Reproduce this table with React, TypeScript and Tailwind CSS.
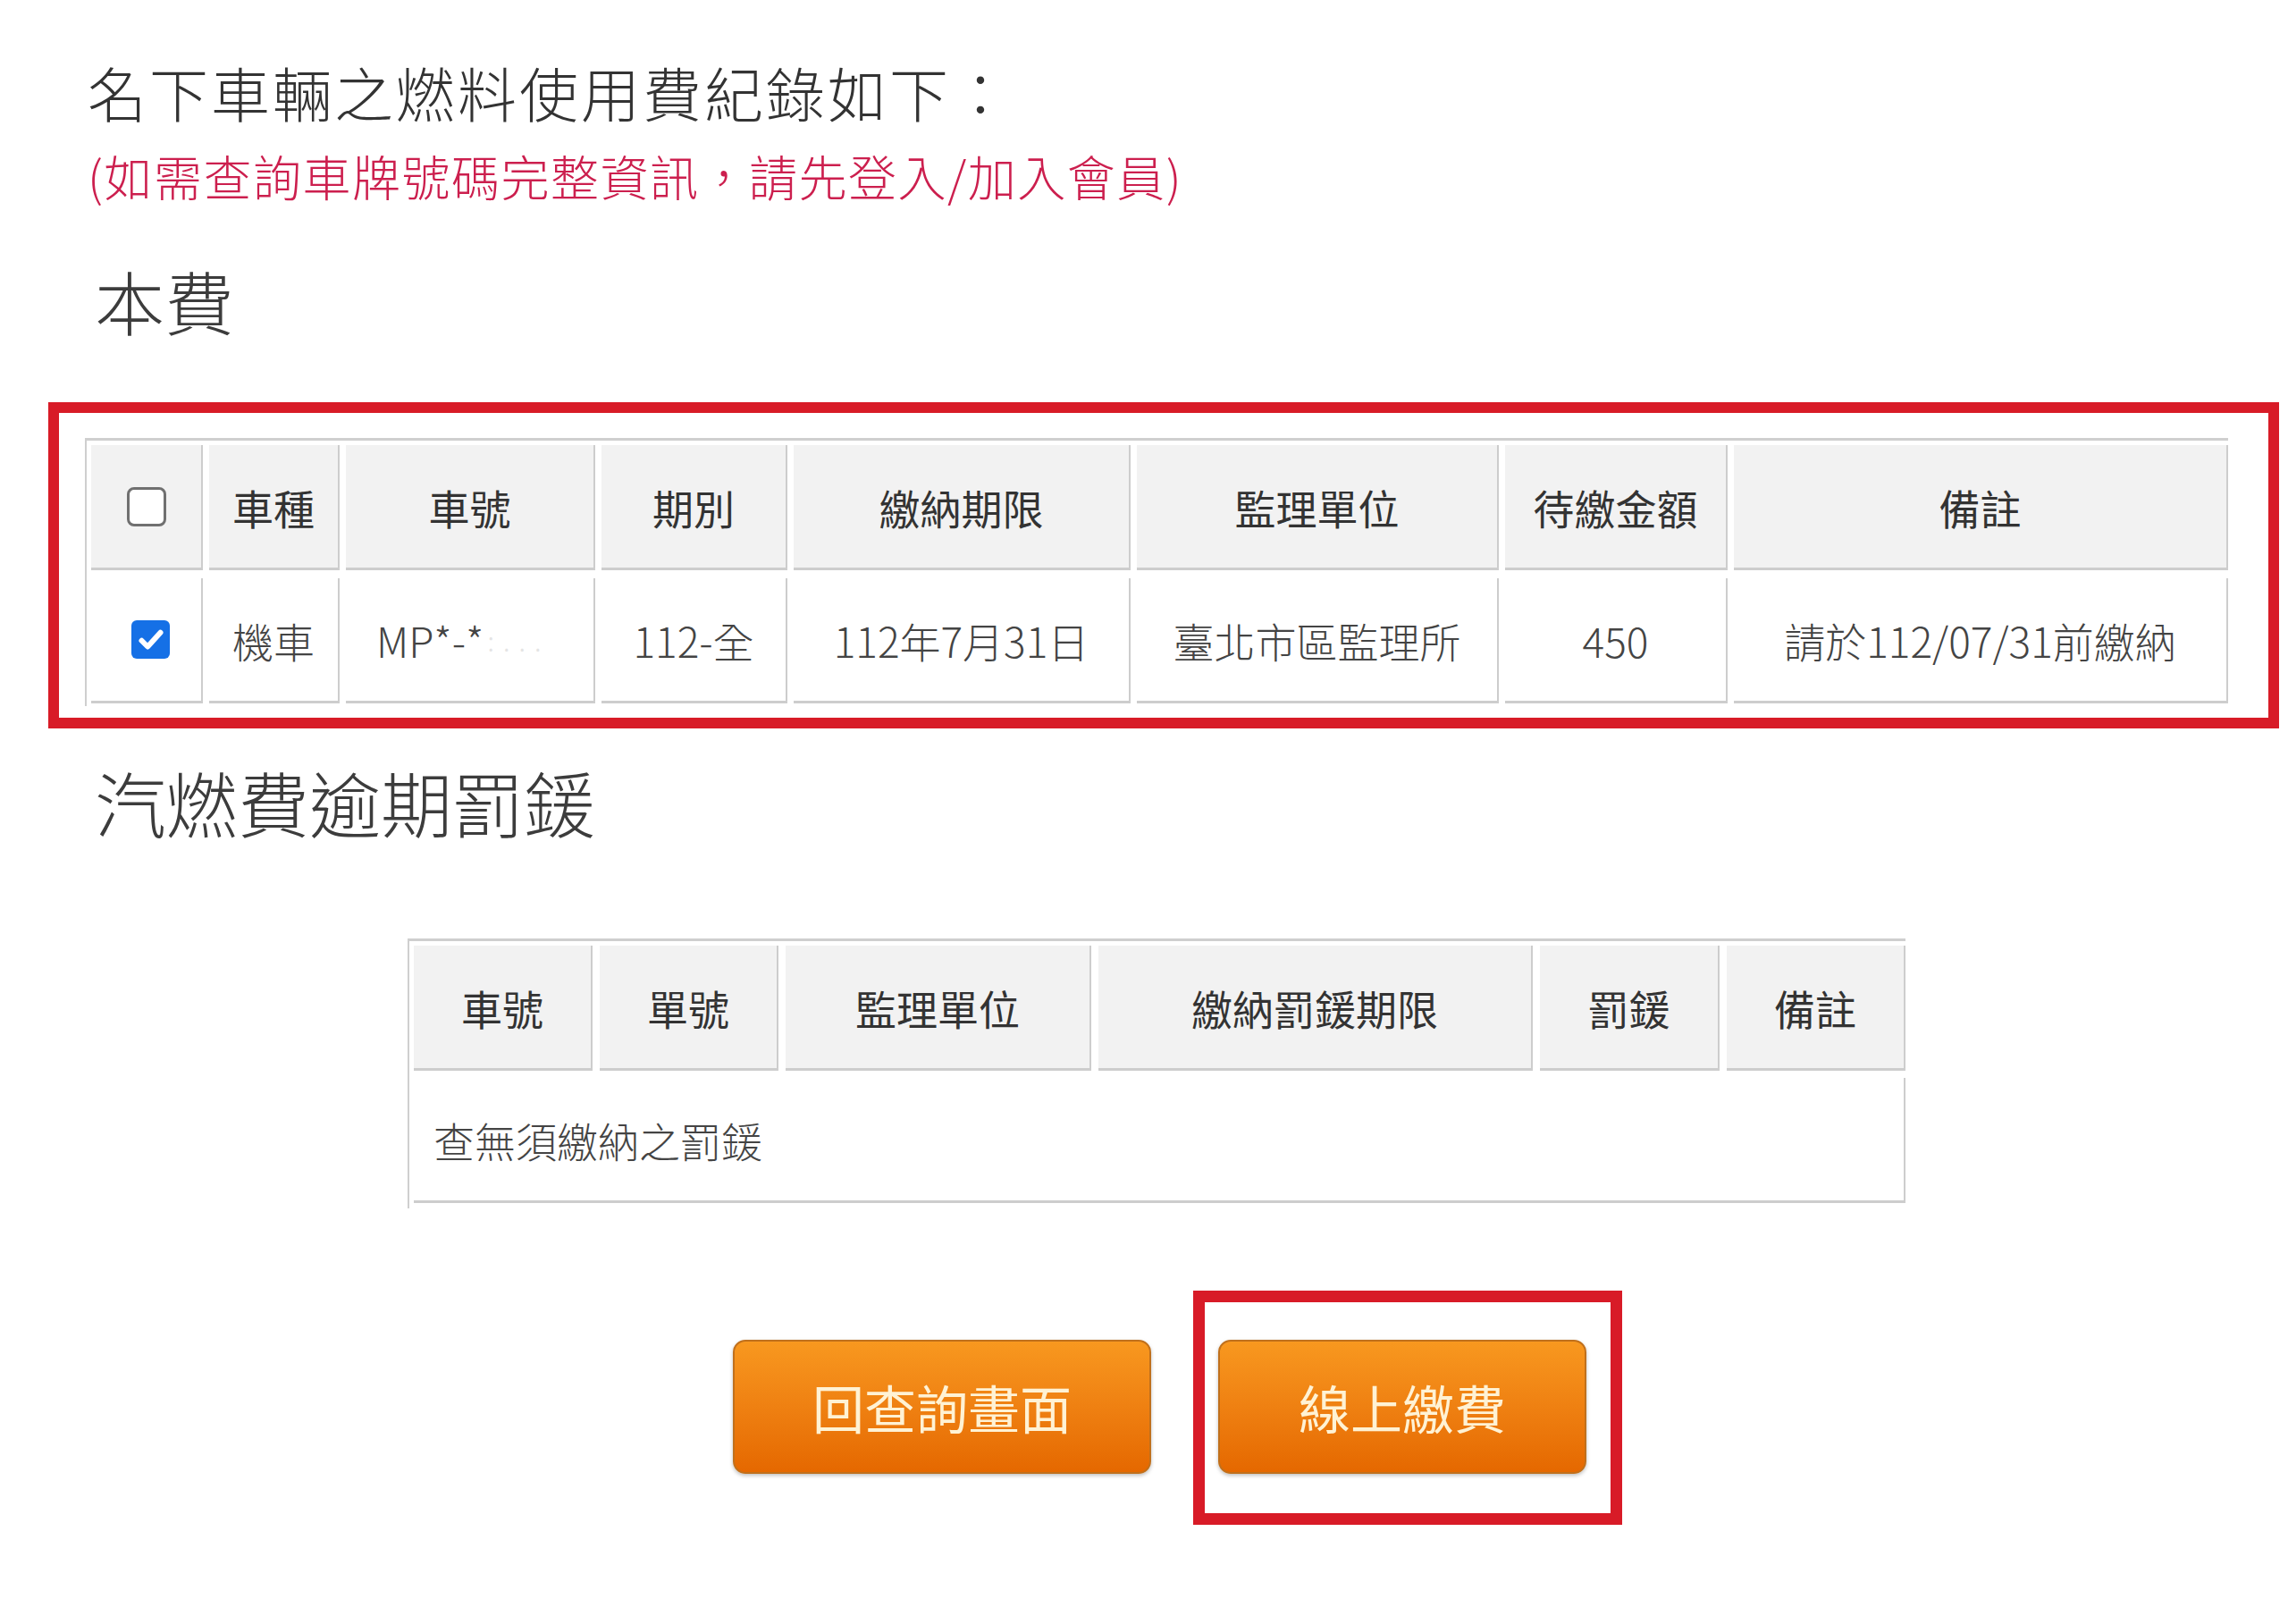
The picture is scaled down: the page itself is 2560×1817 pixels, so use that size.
import React from "react";

const FONT = "font-['Noto_Sans_CJK_TC','Noto_Sans_CJK_SC',sans-serif]";

function Check({ checked }: { checked: boolean }) {
  if (checked) {
    return (
      <div className="ml-[10px] flex h-[43px] w-[43px] items-center justify-center rounded-[6px] bg-[#1570e6]">
        <svg viewBox="0 0 24 24" className="h-[36px] w-[36px]" fill="none" stroke="#ffffff" strokeWidth="4" strokeLinecap="round" strokeLinejoin="round">
          <path d="M5 12.5l4.5 4.5L19 6.5" />
        </svg>
      </div>
    );
  }
  return <div className="h-[44px] w-[44px] rounded-[8px] border-[3px] border-[#707070] bg-white" />;
}

const head1 = ["車種", "車號", "期別", "繳納期限", "監理單位", "待繳金額", "備註"];
const data1 = ["機車", "", "112-全", "112年7月31日", "臺北市區監理所", "450", "請於112/07/31前繳納"];

const head2 = ["車號", "單號", "監理單位", "繳納罰鍰期限", "罰鍰", "備註"];

export default function App() {
  const th = "flex h-[140px] items-center justify-center whitespace-nowrap bg-[#f2f2f2] border-r-2 border-b-[3px] border-[#cdcdcd] text-[46px] font-normal leading-none text-[#333]";
  const td = "flex h-[140px] items-center justify-center whitespace-nowrap bg-white border-r-2 border-b-[3px] border-[#cdcdcd] text-[46px] font-light leading-none text-[#444]";
  return (
    <div className={`${FONT} relative h-[1817px] w-[2560px] overflow-hidden bg-white`}>
      <div className="flex flex-col">
        <h1 className="ml-[98px] mt-[69px] text-[66px] font-light leading-none tracking-[3px] text-[#333]">
          名下車輛之燃料使用費紀錄如下：
        </h1>
        <p className="ml-[98px] mt-[35px] text-[54px] font-light leading-none tracking-[1.5px] text-[#cc1f4e]">
          (如需查詢車牌號碼完整資訊，請先登入/加入會員)
        </p>
        <h2 className="ml-[106px] mt-[73px] text-[78px] font-light leading-none text-[#3c3c3c]">本費</h2>

        <div className="ml-[54px] mt-[75px] w-[2496px] border-[12px] border-[#d81b27] pb-[13px] pl-[29px] pt-[28px]">
          <div className="grid w-max grid-cols-[125px_146px_279px_208px_377px_405px_249px_553px] gap-x-[7px] gap-y-[9px] border-l-2 border-t-[3px] border-[#cfcfcf] pb-[3px] pl-[5px] pt-[5px]">
            <div className={th}>
              <Check checked={false} />
            </div>
            {head1.map((h) => (
              <div key={h} className={th}>
                {h}
              </div>
            ))}
            <div className={td}>
              <Check checked={true} />
            </div>
            {data1.map((d, i) =>
              i === 1 ? (
                <div key={i} className={`${td} !justify-start pl-[34px]`}>
                  <span>MP*-*</span>
                  <span className="ml-[4px] text-[30px] tracking-[10px] text-[#e4e4e4]">:...</span>
                </div>
              ) : (
                <div key={i} className={td}>
                  {d}
                </div>
              )
            )}
          </div>
        </div>

        <h2 className="ml-[106px] mt-[41px] text-[80px] font-light leading-none text-[#3c3c3c]">汽燃費逾期罰鍰</h2>

        <div className="ml-[456px] mt-[114px] grid w-max grid-cols-[200px_200px_342px_486px_201px_200px] gap-x-[8px] gap-y-[8px] border-l-2 border-t-[3px] border-[#cfcfcf] pb-[6px] pl-[5px] pt-[5px]">
          {head2.map((h) => (
            <div key={h} className={th}>
              {h}
            </div>
          ))}
          <div className={`${td} col-span-6 !justify-start pl-[22px]`}>查無須繳納之罰鍰</div>
        </div>

        <div className="ml-[820px] mt-[92px] flex items-start">
          <button className="mt-[55px] flex h-[150px] w-[468px] items-center justify-center rounded-[14px] border-2 border-[#c0701c] bg-linear-to-b from-[#f8981f] to-[#e56800] text-[58px] leading-none text-[#fff2d4] shadow-[0_2px_4px_rgba(0,0,0,0.25)]">
            回查詢畫面
          </button>
          <div className="ml-[47px] w-[480px] border-[13px] border-[#d81b27] pb-[44px] pl-[15px] pt-[42px]">
            <button className="flex h-[150px] w-[412px] items-center justify-center rounded-[14px] border-2 border-[#c0701c] bg-linear-to-b from-[#f8981f] to-[#e56800] text-[58px] leading-none text-[#fff2d4] shadow-[0_2px_4px_rgba(0,0,0,0.25)]">
              線上繳費
            </button>
          </div>
        </div>
      </div>
    </div>
  );
}
